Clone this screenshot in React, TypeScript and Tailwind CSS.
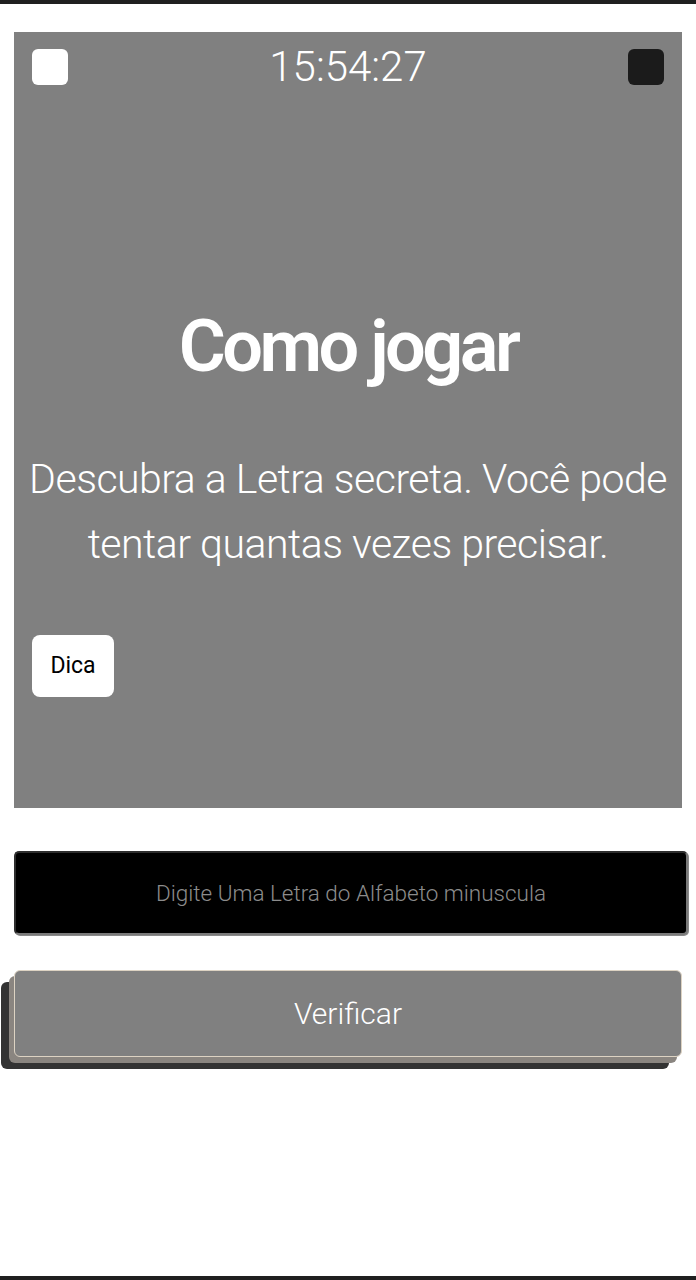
export default function App() {
  return (
    <div className="h-[1280px] flex flex-col bg-white border-t-4 border-b-4 border-[#1f1f1f] font-['Roboto',sans-serif]">
      {/* painel cinza */}
      <div className="mx-[14px] mt-[28px] h-[776px] bg-[#808080] flex flex-col">
        <div className="flex items-center justify-between px-[18px] pt-[17px]">
          <div className="w-9 h-9 rounded-md bg-white" />
          <span className="text-[42px] leading-9 font-light text-white">15:54:27</span>
          <div className="w-9 h-9 rounded-md bg-[#1b1b1b]" />
        </div>

        <h1 className="mt-[226px] text-center text-[72px] leading-none font-semibold tracking-[-3.5px] text-white">
          Como jogar
        </h1>

        <p className="mt-[64px] text-center text-[41px] leading-[65px] font-light tracking-[-0.5px] text-white">
          Descubra a Letra secreta. Você pode tentar quantas vezes precisar.
        </p>

        <div className="px-[18px] mt-[58px]">
          <button className="w-[82px] h-[62px] rounded-lg bg-white text-black text-[23px]">
            Dica
          </button>
        </div>
      </div>

      <input
        placeholder="Digite Uma Letra do Alfabeto minuscula"
        className="ml-[14px] mr-[8px] mt-[43px] h-[84px] rounded-[5px] bg-black border-2 border-[#2e2e2e] border-r-[#7a7a7a] border-b-[#7a7a7a] shadow-[1px_1px_0_#8a8a8a] text-center text-[22.5px] font-light text-white placeholder:text-[#8c8c8c] outline-none"
      />

      <button className="mx-[14px] mt-[35px] h-[87px] rounded-md bg-[#808080] border border-[#ddd3c3] text-white text-[30px] font-light shadow-[-5px_6px_0_#8a8580,-13px_12px_0_#333]">
        Verificar
      </button>
    </div>
  );
}
